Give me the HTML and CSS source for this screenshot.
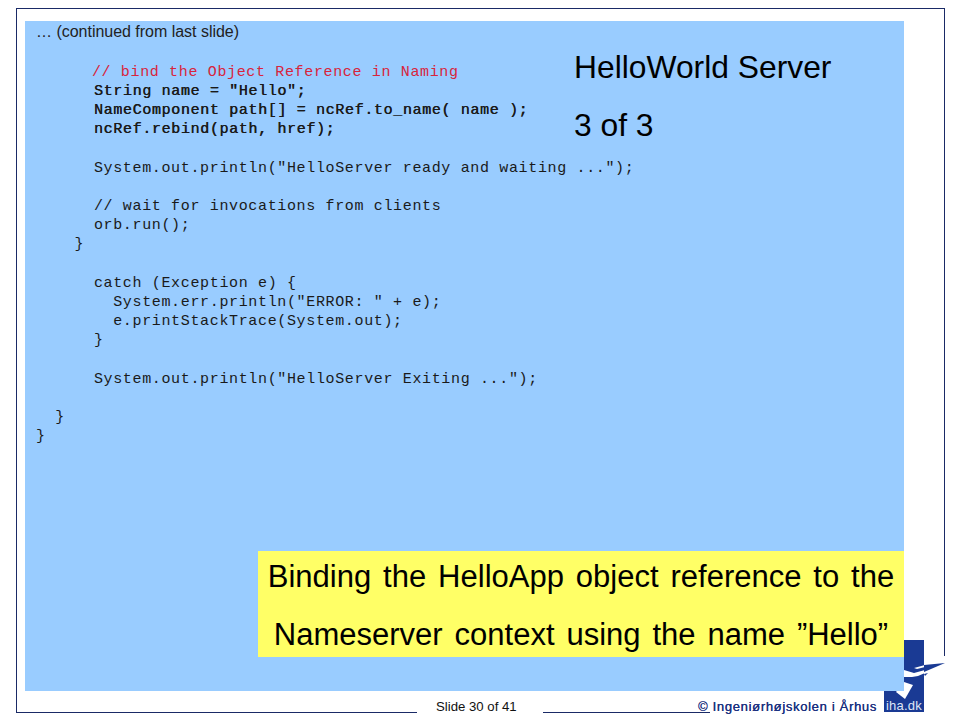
FILE: index.html
```html
<!DOCTYPE html>
<html lang="en">
<head>
<meta charset="utf-8">
<title>HelloWorld Server</title>
<link rel="stylesheet" href="styles.css">
</head>
<body>
<div class="slide">
  <div class="frame"></div>
  <div class="logo">
    <svg width="61" height="74" viewBox="0 0 61 74">
      <path d="M0 72 H61 V74 H0 Z" fill="#fff"/>
      <path d="M40 16 H61 V74 H40 Z" fill="#fff"/>
      <rect x="0" y="0" width="40" height="72" fill="#1a3a94"/>
      <path d="M30 28 L41 25 L41 27 L33 29 Z" fill="#fff"/>
      <path d="M20 30 L30 33 L41 30 L41 33 L34 36 L28 37 L20 37 Z" fill="#fff"/>
      <path d="M40 25 L61 23 L40 32 Z" fill="#1a3a94"/>
      <path d="M40 34 L44 33 L41 36 Z" fill="#1a3a94"/>
      <path d="M20 42 L29 45 L21 59 L12 52 Z" fill="#fff"/>
      <text x="2" y="70" class="logotext">iha.dk</text>
    </svg>
  </div>
  <main class="panel">
    <p class="intro">… (continued from last slide)</p>
    <pre class="code"><span class="comment">      // bind the Object Reference in Naming</span>
<b class="semi">      String name = "Hello";
      NameComponent path[] = ncRef.to_name( name );
      ncRef.rebind(path, href);</b>

      System.out.println("HelloServer ready and waiting ...");

      // wait for invocations from clients
      orb.run();
    }

      catch (Exception e) {
        System.err.println("ERROR: " + e);
        e.printStackTrace(System.out);
      }

      System.out.println("HelloServer Exiting ...");

  }
}</pre>
    <div class="title"><div>HelloWorld Server</div><div>3 of 3</div></div>
    <div class="note"><div>Binding the HelloApp object reference to the</div><div>Nameserver context using the name ”Hello”</div></div>
  </main>
  <footer class="foot">
    <span class="page">Slide 30 of 41</span>
    <span class="copy"><span class="mark">©</span> Ingeniørhøjskolen i Århus</span>
  </footer>
</div>
</body>
</html>
```
FILE: styles.css
```css
* { box-sizing: border-box; }
html, body { margin: 0; padding: 0; background: #fff; }
.slide { position: relative; width: 960px; height: 720px; overflow: hidden; font-family: "Liberation Sans", Arial, sans-serif; color: #000; }
.frame { position: absolute; left: 16px; top: 8px; width: 929px; height: 705px; border: 1px solid #1a2a66; }
.panel { position: absolute; left: 25px; top: 21px; width: 879px; height: 670px; background: #99ccff; }
.intro { margin: 0; position: absolute; left: 11px; top: 3px; font-size: 16px; letter-spacing: -.02px; line-height: 16px; color: #222; }
.code { margin: 0; position: absolute; left: 11px; top: 42px; font: 15px/19.16px "Liberation Mono", monospace; letter-spacing: .65px; color: #1a1a1a; }
.comment { color: #d8243c; margin-left: -2px; }
.semi { font-weight: normal; text-shadow: .4px 0 0 #1a1a1a; }
.title { position: absolute; left: 549px; top: 17px; font-size: 31.8px; line-height: 58px; }
.note { position: absolute; left: 233px; top: 530px; width: 646px; height: 106px; background: #ffff66; text-align: center; font-size: 31px; word-spacing: 3.3px; line-height: 58px; }
.note div { position: relative; top: -3px; }
.foot { position: absolute; left: 0; top: 692px; width: 100%; height: 28px; }
.page { position: absolute; left: 417px; top: 7px; width: 126px; height: 20px; padding-left: 19px; background: #fff; font-size: 13.2px; line-height: 16px; color: #111; }
.copy { position: absolute; left: 698px; top: 7px; width: 186px; height: 21px; background: linear-gradient(#fff, #fff) 12px 0 / 174px 100% no-repeat; font-size: 13px; line-height: 16px; color: #1a3080; letter-spacing: .68px; text-shadow: .2px 0 0 #1a3080; white-space: nowrap; }
.logo { position: absolute; left: 884px; top: 640px; width: 61px; height: 74px; }
.logotext { font: 13px "Liberation Sans", sans-serif; letter-spacing: .2px; fill: #dfe6f6; }
```
